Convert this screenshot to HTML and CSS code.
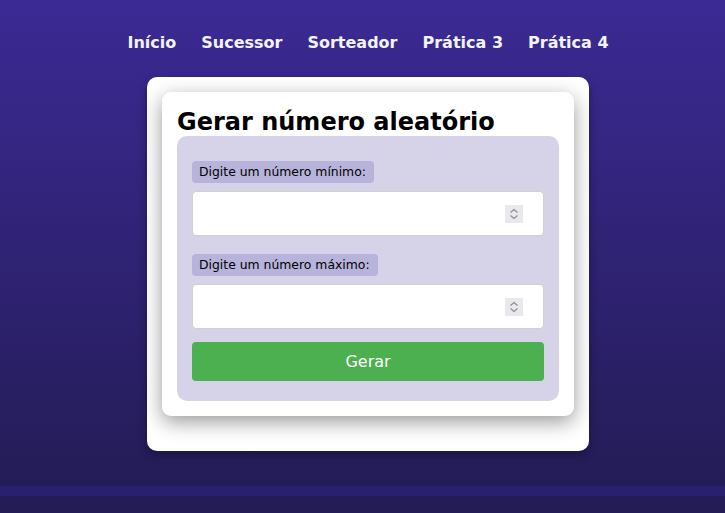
FILE: index.html
```html
<!DOCTYPE html>
<html lang="pt-BR">
<head>
<meta charset="utf-8">
<title>Sorteador</title>
<link rel="stylesheet" href="styles.css">
</head>
<body>
<div class="page">
  <nav class="nav">
    <a href="#">Início</a>
    <a href="#">Sucessor</a>
    <a href="#">Sorteador</a>
    <a href="#">Prática 3</a>
    <a href="#">Prática 4</a>
  </nav>
  <main class="outer">
    <section class="card">
      <h1 class="title">Gerar número aleatório</h1>
      <form class="panel">
        <label class="badge" for="min">Digite um número mínimo:</label>
        <div class="field-wrap">
          <input class="field" id="min" type="number">
          <span class="spin" aria-hidden="true">
            <svg width="18" height="18" viewBox="0 0 18 18"><path d="M5.5 7.5 L9 4.5 L12.5 7.5 M5.5 10.5 L9 13.5 L12.5 10.5" fill="none" stroke="#8a8a92" stroke-width="1.1"/></svg>
          </span>
        </div>
        <label class="badge badge-next" for="max">Digite um número máximo:</label>
        <div class="field-wrap">
          <input class="field" id="max" type="number">
          <span class="spin" aria-hidden="true">
            <svg width="18" height="18" viewBox="0 0 18 18"><path d="M5.5 7.5 L9 4.5 L12.5 7.5 M5.5 10.5 L9 13.5 L12.5 10.5" fill="none" stroke="#8a8a92" stroke-width="1.1"/></svg>
          </span>
        </div>
        <button class="btn" type="button">Gerar</button>
      </form>
    </section>
  </main>
</div>
<footer class="footer"></footer>
</body>
</html>
```

FILE: styles.css
```css
html, body {
  margin: 0;
  padding: 0;
}
body {
  background: #231c56;
  font-family: "DejaVu Sans", Verdana, sans-serif;
  min-height: 513px;
}
.page {
  height: 486px;
  box-sizing: border-box;
  padding: 33px 0 0 11px;
  background: linear-gradient(#3b2a94, #241c57);
  display: flex;
  flex-direction: column;
  align-items: center;
}
.nav {
  display: flex;
  gap: 25px;
  line-height: 19px;
}
.nav a {
  color: #f3f3fb;
  font-weight: bold;
  font-size: 16px;
  text-decoration: none;
}
.outer {
  margin-top: 25px;
  width: 442px;
  box-sizing: border-box;
  padding: 15px 15px 35px;
  background: #fff;
  border-radius: 10px;
  box-shadow: 0 4px 10px rgba(0, 0, 0, 0.3);
}
.card {
  background: #fff;
  border-radius: 9px;
  padding: 16px 15px 15px;
  box-shadow: 0 6px 20px rgba(0, 0, 0, 0.4);
}
.title {
  margin: 0;
  font-size: 24px;
  line-height: 28px;
  font-weight: bold;
  color: #000;
}
.panel {
  background: #d6d3e8;
  border-radius: 10px;
  padding: 25px 15px 20px;
  display: flex;
  flex-direction: column;
  align-items: flex-start;
}
.badge {
  background: #b8b3da;
  border-radius: 4px;
  font-size: 12.4px;
  line-height: 14px;
  padding: 4px 8px 4px 7px;
  color: #000;
}
.badge-next {
  margin-top: 18px;
}
.field-wrap {
  position: relative;
  margin-top: 8px;
  align-self: stretch;
}
.field {
  display: block;
  width: 100%;
  height: 45px;
  box-sizing: border-box;
  border: 1px solid #cfcfd6;
  border-radius: 4px;
  background: #fff;
  padding: 12px 42px 12px 12px;
  font-size: 16px;
  font-family: "DejaVu Sans", sans-serif;
  -moz-appearance: textfield;
}
.field::-webkit-inner-spin-button,
.field::-webkit-outer-spin-button {
  -webkit-appearance: none;
  margin: 0;
}
.spin {
  position: absolute;
  right: 21px;
  top: 14px;
  width: 18px;
  height: 18px;
  background: #e9e9ed;
  display: flex;
}
.btn {
  margin-top: 13px;
  align-self: stretch;
  height: 39px;
  border: none;
  border-radius: 4px;
  background: #4caf50;
  color: #fff;
  font-family: "DejaVu Sans", sans-serif;
  font-size: 16px;
}
.footer {
  height: 17px;
  border-top: 10px solid #2a2070;
  background: #231c56;
}
```
